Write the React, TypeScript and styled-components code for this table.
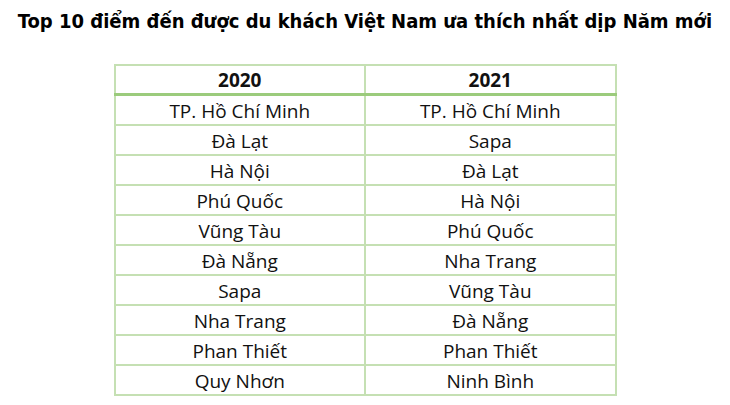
import React from 'react';
import styled, { createGlobalStyle } from 'styled-components';

const GlobalStyle = createGlobalStyle`
  html, body {
    margin: 0;
    padding: 0;
    background: #ffffff;
  }
  body {
    font-family: "Open Sans", "Noto Sans", sans-serif;
    color: #111;
  }
`;

const Page = styled.div`
  width: 730px;
  height: 405px;
  display: flex;
  flex-direction: column;
  align-items: center;
  overflow: hidden;
`;

const Title = styled.h1`
  margin: 8px 0 0;
  font-family: "DejaVu Sans Condensed", "DejaVu Sans", sans-serif;
  font-stretch: condensed;
  font-weight: bold;
  font-size: 20px;
  line-height: 26px;
  color: #000;
  white-space: nowrap;
`;

const Table = styled.table`
  margin-top: 30px;
  width: 503px;
  border-collapse: collapse;
  table-layout: fixed;
  border: 2px solid #c5e0b3;
`;

const HeadCell = styled.th`
  box-sizing: border-box;
  height: 27px;
  padding: 1px 0 0;
  font-weight: 700;
  font-size: 19px;
  line-height: 26px;
  text-align: center;
  border-left: 2px solid #c5e0b3;
  border-bottom: 3px solid #9bcb7c;
  &:first-child { border-left: none; }
`;

const Cell = styled.td`
  box-sizing: border-box;
  height: 28px;
  padding: 2px 0 0;
  font-size: 19px;
  line-height: 26px;
  text-align: center;
  border-left: 2px solid #c5e0b3;
  border-top: 2px solid #c5e0b3;
  &:first-child { border-left: none; }
`;

const rows: [string, string][] = [
  ['TP. Hồ Chí Minh', 'TP. Hồ Chí Minh'],
  ['Đà Lạt', 'Sapa'],
  ['Hà Nội', 'Đà Lạt'],
  ['Phú Quốc', 'Hà Nội'],
  ['Vũng Tàu', 'Phú Quốc'],
  ['Đà Nẵng', 'Nha Trang'],
  ['Sapa', 'Vũng Tàu'],
  ['Nha Trang', 'Đà Nẵng'],
  ['Phan Thiết', 'Phan Thiết'],
  ['Quy Nhơn', 'Ninh Bình'],
];

export default function App() {
  return (
    <Page>
      <GlobalStyle />
      <Title>Top 10 điểm đến được du khách Việt Nam ưa thích nhất dịp Năm mới</Title>
      <Table>
        <thead>
          <tr>
            <HeadCell>2020</HeadCell>
            <HeadCell>2021</HeadCell>
          </tr>
        </thead>
        <tbody>
          {rows.map(([a, b], i) => (
            <tr key={i}>
              <Cell>{a}</Cell>
              <Cell>{b}</Cell>
            </tr>
          ))}
        </tbody>
      </Table>
    </Page>
  );
}
